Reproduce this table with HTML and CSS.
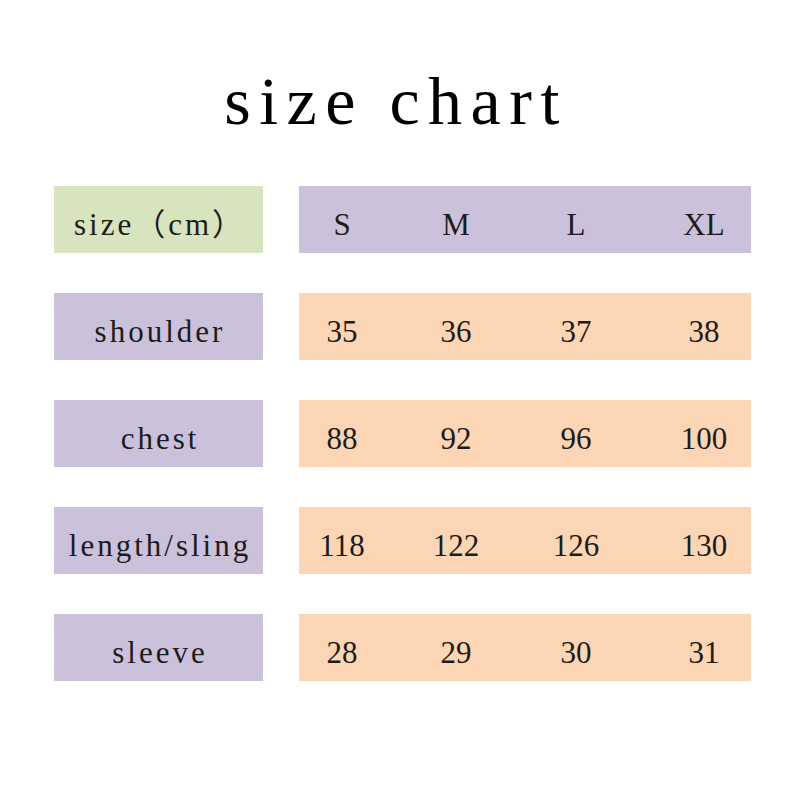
FILE: index.html
```html
<!DOCTYPE html>
<html>
<head>
<meta charset="utf-8">
<link rel="stylesheet" href="styles.css">
</head>
<body>
<div class="page">
  <h1 class="title">size chart</h1>
  <div class="chart">
    <div class="label green">size（cm）</div>
    <div class="values purple"><span>S</span><span>M</span><span>L</span><span>XL</span></div>

    <div class="label purple">shoulder</div>
    <div class="values orange"><span>35</span><span>36</span><span>37</span><span>38</span></div>

    <div class="label purple">chest</div>
    <div class="values orange"><span>88</span><span>92</span><span>96</span><span>100</span></div>

    <div class="label purple">length/sling</div>
    <div class="values orange"><span>118</span><span>122</span><span>126</span><span>130</span></div>

    <div class="label purple">sleeve</div>
    <div class="values orange"><span>28</span><span>29</span><span>30</span><span>31</span></div>
  </div>
</div>
</body>
</html>
```

FILE: styles.css
```css
html, body {
  margin: 0;
  padding: 0;
  background: #ffffff;
}

.page {
  width: 800px;
  height: 800px;
  padding-top: 67px;
  box-sizing: border-box;
  font-family: "Liberation Serif", "Noto Sans CJK SC", serif;
  color: #1c1c1c;
}

.title {
  margin: 0;
  font-size: 68px;
  font-weight: normal;
  line-height: 68px;
  height: 68px;
  letter-spacing: 8.5px;
  text-align: center;
  padding-right: 8px;
  color: #000;
}

.chart {
  margin-top: 51px;
  margin-left: 54px;
  display: grid;
  grid-template-columns: 209px 452px;
  column-gap: 36px;
  row-gap: 40px;
}

.label,
.values {
  height: 67px;
  box-sizing: border-box;
  padding-top: 10px;
  line-height: 57px;
  font-size: 31px;
}

.label {
  text-align: center;
  letter-spacing: 3px;
  padding-left: 3px;
}

.values {
  display: grid;
  grid-template-columns: 86px 142px 98px 126px;
  justify-items: center;
}

.values span:last-child {
  padding-left: 32px;
}

.green { background: #d7e4bd; }
.purple { background: #ccc1da; }
.orange { background: #fcd5b5; }
```
